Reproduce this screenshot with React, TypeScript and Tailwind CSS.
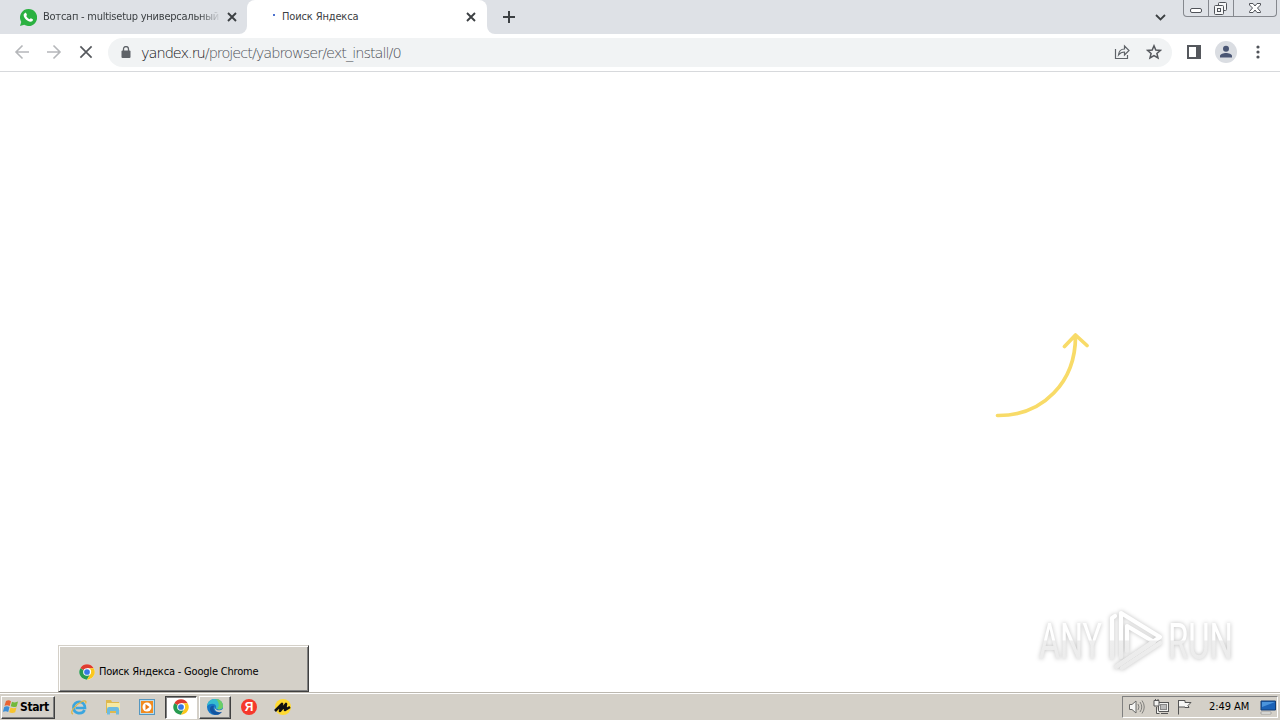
import type { ReactNode } from "react";

const tahoma = "font-['DejaVu_Sans_Condensed','DejaVu_Sans',sans-serif] [font-stretch:condensed]";

function Chrome() {
  return (
    <svg className="block h-4 w-4 shrink-0" viewBox="0 0 48 48">
      <circle cx="24" cy="24" r="23" fill="#fff" />
      <path d="M24 24 4 12.5A23 23 0 0 1 44 12.5H24Z" fill="#df3c30" />
      <path d="M4 12.5A23 23 0 0 0 24 47L34 29.7 24 24Z" fill="#279b50" />
      <path d="M44 12.5A23 23 0 0 1 24 47L34 29.7A11 11 0 0 0 30 13V12.5Z" fill="#fbc71c" />
      <circle cx="24" cy="24" r="11.5" fill="#fff" />
      <circle cx="24" cy="24" r="8.6" fill="#3678e5" />
    </svg>
  );
}

function Cross({ className, w = 1.9 }: { className: string; w?: number }) {
  return (
    <svg className={className} viewBox="0 0 10 10" fill="none" stroke="currentColor" strokeWidth={w}>
      <path d="m1 1 8 8M9 1 1 9" />
    </svg>
  );
}

function TabStrip() {
  return (
    <div className="flex h-[34px] shrink-0 bg-white text-[#3c4043]">
      <div className="flex w-[247px] items-center rounded-br-lg bg-[#dee1e6] pl-5">
        <svg className="h-[17px] w-[17px] shrink-0" viewBox="0 0 24 24">
          <path d="M12 0A12 12 0 0 0 1.8 18.2L0 24l6-1.7A12 12 0 1 0 12 0Z" fill="#2bb141" />
          <path d="M7 5.5c.6-.5 1.4-.4 1.8.4l1 2.2c.2.6-.7 1.4-1 1.8 1 2 2.8 3.7 5 4.6.5-.5 1-1.500 1.600-1.500l2.600 1.300c.7.4.2 2.200-.8 3-1.500 1.200-3.900.8-6.900-1-2.800-1.700-5.300-5-5.200-7.900 0-1.200 1.100-2.300 1.900-2.900Z" fill="#fff" />
        </svg>
        <div className={`${tahoma} ml-1.5 w-[178px] overflow-hidden pt-px text-[11px] tracking-[-0.24px] whitespace-nowrap [mask-image:linear-gradient(to_right,#000_88%,transparent)]`}>
          Вотсап - multisetup универсальный
        </div>
        <Cross className="ml-[6px] h-[10px] w-[10px]" />
      </div>
      <div className="flex w-60 bg-[linear-gradient(#dee1e6_50%,#fff_50%)]">
        <div className="flex h-full w-60 items-center rounded-t-lg bg-white pl-[26px]">
          <div className="mb-1 h-[2px] w-[2px] bg-[#4d72cf]" />
          <div className={`${tahoma} ml-[7px] w-[184px] pt-px text-[11px] tracking-[-0.14px] whitespace-nowrap`}>Поиск Яндекса</div>
          <Cross className="h-[10px] w-[10px]" />
        </div>
      </div>
      <div className="flex flex-1 rounded-bl-lg bg-[#dee1e6]">
        <div className="flex items-center pl-4">
          <svg className="h-3 w-3" viewBox="0 0 12 12" stroke="currentColor" strokeWidth="2"><path d="M6 0v12M0 6h12" /></svg>
        </div>
        <div className="ml-auto flex pt-[14px] pr-[17px]">
          <svg className="h-[7px] w-[11px]" viewBox="0 0 11 7" fill="none" stroke="currentColor" strokeWidth="1.8"><path d="m1 1 4.500 4.500L10 1" /></svg>
        </div>
        <div className="mr-[3px] flex h-[17px] w-[94px] rounded-b-[4px] border border-t-0 border-[#85888e] bg-[#dfe2e7]">
          <div className="flex w-[25px] justify-center border-r border-[#85888e]">
            <svg className="h-4 w-4" viewBox="0 0 16 16"><rect x="2.500" y="8.500" width="11" height="4" rx="1.500" fill="#fff" stroke="#505359" /></svg>
          </div>
          <div className="flex w-[25px] justify-center border-r border-[#85888e]">
            <svg className="h-4 w-4" viewBox="0 0 16 16" fill="#f6f7f8" stroke="#505359"><rect x="5.500" y="2.500" width="8" height="8" rx="1" /><rect x="1.500" y="5.500" width="9" height="9" rx="1" /><rect x="4.500" y="8.500" width="3" height="3" /></svg>
          </div>
          <div className="flex flex-1 justify-center">
            <svg className="h-4 w-4" viewBox="0 0 16 16" fill="#fff" stroke="#505359"><path d="M2.500 3.500h3.500l2 2.500 2-2.500h3.500v1.500L10.500 8l3 3.500v1H10L8 10l-2 2.500H2.500v-1l3-3.500-3-3Z" /></svg>
          </div>
        </div>
      </div>
    </div>
  );
}

function Toolbar() {
  return (
    <div className="flex h-[38px] shrink-0 items-center border-b border-[#d7d9dc] bg-white pb-px text-[#5f6368]">
      <svg className="ml-[14px] h-4 w-4" viewBox="0 0 16 16" fill="none" stroke="#b5b7ba" strokeWidth="1.600"><path d="M15 8H2M8.500 1.500 2 8l6.500 6.500" /></svg>
      <svg className="ml-4 h-4 w-4" viewBox="0 0 16 16" fill="none" stroke="#b5b7ba" strokeWidth="1.600"><path d="M1 8h13M7.500 1.500 14 8l-6.500 6.500" /></svg>
      <Cross className="ml-[17px] h-[14px] w-[14px] text-[#55585d]" w={1.2} />
      <div className="ml-[15px] flex h-[29px] w-[1064px] items-center rounded-full bg-[#f1f3f4]">
        <svg className="ml-[13px] h-3 w-[10px]" viewBox="0 0 10 12"><path d="M2.500 5V3a2.500 2.500 0 0 1 5 0v2" fill="none" stroke="#5f6368" strokeWidth="1.300" /><rect x=".5" y="4.500" width="9" height="7.500" rx="1" fill="#5f6368" /></svg>
        <div className="ml-[10px] pt-[3px] font-['DejaVu_Sans_Light','DejaVu_Sans',sans-serif] text-[14.500px] font-extralight tracking-[-1.010px] whitespace-nowrap text-[#4d5156]">
          <span className="text-[#111214]">yandex.ru</span>/project/yabrowser/ext_install/0
        </div>
        <svg className="ml-auto h-4 w-4" viewBox="0 0 16 16" fill="none" stroke="currentColor" strokeWidth="1.200"><path d="M1.500 5v9.500h12V11M4.500 11c.4-4 2.500-6 6-6V2l4.500 4.500-4.500 4.500V8C8 8 6 9 4.500 11Z" /></svg>
        <svg className="mr-[10px] ml-4 h-4 w-4" viewBox="0 0 16 16" fill="none" stroke="#55585d" strokeWidth="1.500"><path d="m8 1.800 1.800 4.200 4.600.4-3.500 3 1.100 4.500L8 11.500l-4 2.400 1.100-4.500-3.500-3L6.200 6Z" /></svg>
      </div>
      <svg className="ml-[15px] h-[14px] w-[14px]" viewBox="0 0 14 14"><path d="M1 1h12v12H1Z" fill="none" stroke="#55585d" strokeWidth="2" /><path d="M9 1h5v12H9Z" fill="#55585d" /></svg>
      <svg className="ml-[14px] h-[22px] w-[22px]" viewBox="0 0 22 22"><circle cx="11" cy="11" r="11" fill="#dadde2" /><circle cx="11" cy="7.800" r="3" fill="#4a5674" /><path d="M5 16.500v-1.500c0-2 3.500-3 6-3s6 1 6 3v1.500Z" fill="#4a5674" /></svg>
      <svg className="ml-[19px] h-[14px] w-[4px]" viewBox="0 0 4 14" fill="#505359"><circle cx="2" cy="2" r="1.600" /><circle cx="2" cy="7" r="1.600" /><circle cx="2" cy="12" r="1.600" /></svg>
    </div>
  );
}

function Watermark() {
  return (
    <svg className="absolute top-[523px] left-[1020px] h-[85px] w-[230px] overflow-visible drop-shadow-[0_0_2px_rgba(0,0,0,0.25)]" viewBox="0 0 230 85">
      <defs>
        <linearGradient id="fade" gradientUnits="userSpaceOnUse" x1="0" x2="0" y1="0" y2="85">
          <stop offset="0" stopColor="#fff" /><stop offset=".53" stopColor="#fff" /><stop offset=".54" stopColor="#eeeeee" /><stop offset="1" stopColor="#e9e9e9" />
        </linearGradient>
      </defs>
      <g fill="url(#fade)" fontFamily="Roboto, sans-serif" fontSize="50" fontWeight="400">
        <text x="19" y="64" textLength="63" lengthAdjust="spacingAndGlyphs">ANY</text>
        <text x="148" y="64" textLength="65" lengthAdjust="spacingAndGlyphs">RUN</text>
      </g>
      <g fill="none" stroke="url(#fade)" strokeWidth="4.200" strokeLinejoin="round" strokeLinecap="round">
        <path d="M101 62V18l39 24-44 30" />
        <path d="M92 63V23l3-2M140 48l-38 25" />
        <path d="M107 56V31l27 16-37 24" />
      </g>
    </svg>
  );
}

function TaskIcon({ children, className = "" }: { children: ReactNode; className?: string }) {
  return <div className={`flex h-[23px] w-[34px] items-center justify-center ${className}`}>{children}</div>;
}

function Taskbar() {
  return (
    <div className="flex h-7 shrink-0 items-center border-t border-[#bcb8b0] bg-[#d4d0c8] pt-px shadow-[inset_0_1px_0_#fff]">
      <div className={`${tahoma} ml-px flex h-[23px] w-[54px] items-center border border-t-white border-r-[#404040] border-b-[#404040] border-l-white pl-px text-[12px] font-bold tracking-[-0.400px] text-black shadow-[inset_-1px_-1px_0_#808080]`}>
        <svg className="mr-px h-4 w-4 shrink-0" viewBox="0 0 16 16">
          <path d="M3 2c2-1 3.500-.8 5 .2L6.700 7C5 6 3.500 6 1.500 6.800Z" fill="#e96432" />
          <path d="M9 2.700c2 1 3.800.9 6-.1l-1.300 4.800c-2 1-4 .9-6-.1Z" fill="#72b93a" />
          <path d="M1.200 8c2-.9 3.700-.8 5.300.1L5.200 13C3.500 12 2 12-.1 12.800Z" fill="#3c8fd7" />
          <path d="M7.500 8.500c2 1 4 1 6 .1l-1.300 4.700c-2 1-4 1-6 0Z" fill="#f7c42d" />
        </svg>
        Start
      </div>
      <div className="ml-[7px] flex">
        <TaskIcon>
          <svg className="h-[18px] w-[18px]" viewBox="0 0 18 18" fill="none"><path d="M14.500 12c-2 5-11 4-11-2.500 0-7.500 11.500-7.500 11.500.500H5.500" stroke="#3ba6df" strokeWidth="2.700" /><path d="M3 16c-4-1 2-9 8-12 4-2 6-1 4.500 1.500" stroke="#e1b645" strokeWidth="1.300" /></svg>
        </TaskIcon>
        <TaskIcon>
          <svg className="h-4 w-4" viewBox="0 0 16 16"><path d="M1 1h5l1 2h7v11H1Z" fill="#dfb94e" /><path d="M2 4h13v7H2Z" fill="#f7e9a2" /><path d="M2 15.500V10q0-2 2-2h8q2 0 2 2v5.500h-3V12H5v3.500Z" fill="#6dbbe0" /></svg>
        </TaskIcon>
        <TaskIcon>
          <svg className="h-4 w-4" viewBox="0 0 16 16"><rect x=".5" y=".5" width="15" height="15" fill="#b9dcec" stroke="#5597c0" /><rect x="2" y="2" width="12" height="12" fill="#f18b20" /><circle cx="8" cy="8" r="4.500" fill="#fff" /><path d="m6.500 5 4 3-4 3Z" fill="#e87816" /></svg>
        </TaskIcon>
        <div className="ml-px flex h-[23px] w-8 items-center justify-center border border-t-[#404040] border-r-white border-b-white border-l-[#404040] bg-white shadow-[inset_1px_1px_0_#808080]"><Chrome /></div>
        <div className="ml-[2px] flex h-[23px] w-8 items-center justify-center border border-t-white border-r-[#404040] border-b-[#404040] border-l-white shadow-[inset_-1px_-1px_0_#808080]">
          <svg className="h-4 w-4" viewBox="0 0 16 16"><circle cx="8" cy="8" r="8" fill="#1677c6" /><path d="M0 7C1 1 5 0 8 0c5 0 8 3.500 8 7 0 3-3 4-6 3-2-1-.5-2-1-3-1-3-6-3-9 0Z" fill="#35bcd0" /><path d="M9 0c4 0 7 3 7 7 0 3-3 4-6 3 3-3 2-7-1-10Z" fill="#6cce66" /><path d="M7 7c-2 3 1 7 6 6 2 0 2 0 1 1-4 4-11 1-11-4 0-2 2-4 4-3Z" fill="#1454a0" /><path d="M8 7c-1 3 2 5 6 4l2-1v2c-4 3-10 0-8-5Z" fill="#d4d0c8" /></svg>
        </div>
        <TaskIcon className="ml-px">
          <div className="flex h-4 w-4 items-center justify-center rounded-full bg-[#f5382b] font-['Liberation_Sans',sans-serif] text-[12px] leading-none font-bold text-white">Я</div>
        </TaskIcon>
        <TaskIcon>
          <svg className="h-4 w-[18px]" viewBox="0 0 18 16"><circle cx="9" cy="8" r="8" fill="#ffda32" /><path d="m1 12 7-7-2 7 6-7-1 6 5-3" fill="none" stroke="#111" strokeWidth="2.600" strokeLinejoin="round" /></svg>
        </TaskIcon>
      </div>
      <div className="mr-[2px] ml-auto flex h-[22px] w-[156px] items-center border border-t-[#808080] border-r-white border-b-white border-l-[#808080] pl-[6px]">
        <svg className="h-4 w-4 shrink-0" viewBox="0 0 16 16" fill="#f6f6f4" stroke="#6b6b69"><path d="M.5 5.500H3L7 2v12l-4-3.500H.5Z" /><path d="M9 5q2 3 0 6M11 3q3.500 5 0 10M13 1.500q4.500 6.500 0 13" fill="none" strokeWidth=".8" /></svg>
        <svg className="ml-2 h-4 w-4 shrink-0" viewBox="0 0 16 16" fill="#f2f2f0" stroke="#555"><rect x="5.500" y="3.500" width="10" height="9" /><rect x="7.500" y="5.500" width="6" height="5" fill="#bbb" stroke="#888" /><path d="M8 14.500h7M3.500 8v6.500h3M1 1.500h5V7H1ZM2.500 0v2M5 0v2" /></svg>
        <svg className="ml-[7px] h-4 w-4 shrink-0" viewBox="0 0 16 16" fill="#f6f6f4" stroke="#555"><path d="M2.500 15.500V1M3 1.500h6v2h6l-3 3 1 2H9V8H3" /></svg>
        <div className={`${tahoma} ml-[17px] w-[52px] shrink-0 pt-px text-[11px] tracking-[-0.050px] whitespace-nowrap text-black`}>2:49 AM</div>
        <svg className="-ml-px h-4 w-4 shrink-0" viewBox="0 0 16 16"><path d="M1 2h14.500v9H1Z" fill="#1b62b7" stroke="#123c75" /><path d="M2 3h13L2 8Z" fill="#4b94dc" /><path d="M1 13h10v2H1Z" fill="#f4f4f0" stroke="#777" strokeWidth=".5" /></svg>
      </div>
    </div>
  );
}

export default function App() {
  return (
    <div className="flex h-[720px] w-[1280px] flex-col overflow-hidden bg-white">
      <TabStrip />
      <Toolbar />
      <main className="relative min-h-0 flex-1 bg-white">
        <svg className="absolute top-[258px] left-[992px] h-[92px] w-[100px]" viewBox="0 0 100 92" fill="none" stroke="#f8db68" strokeWidth="3.700" strokeLinecap="round" strokeLinejoin="round"><path d="M5.500 85.500C51 86 84 52 83.500 5M72.500 16.500l11-11.500 11.500 10.500" /></svg>
        <Watermark />
        <div className="absolute bottom-0 left-[58px] flex h-[47px] w-[251px] items-center border border-t-[#d4d0c8] border-r-[#404040] border-b-[#404040] border-l-[#d4d0c8] bg-[#d4d0c8] pt-[6px] pl-5 shadow-[inset_1px_1px_0_#fff,inset_-1px_-1px_0_#808080]">
          <Chrome />
          <div className={`${tahoma} ml-1 pt-px text-[11px] tracking-[-0.190px] whitespace-nowrap text-black`}>Поиск Яндекса - Google Chrome</div>
        </div>
      </main>
      <Taskbar />
    </div>
  );
}
